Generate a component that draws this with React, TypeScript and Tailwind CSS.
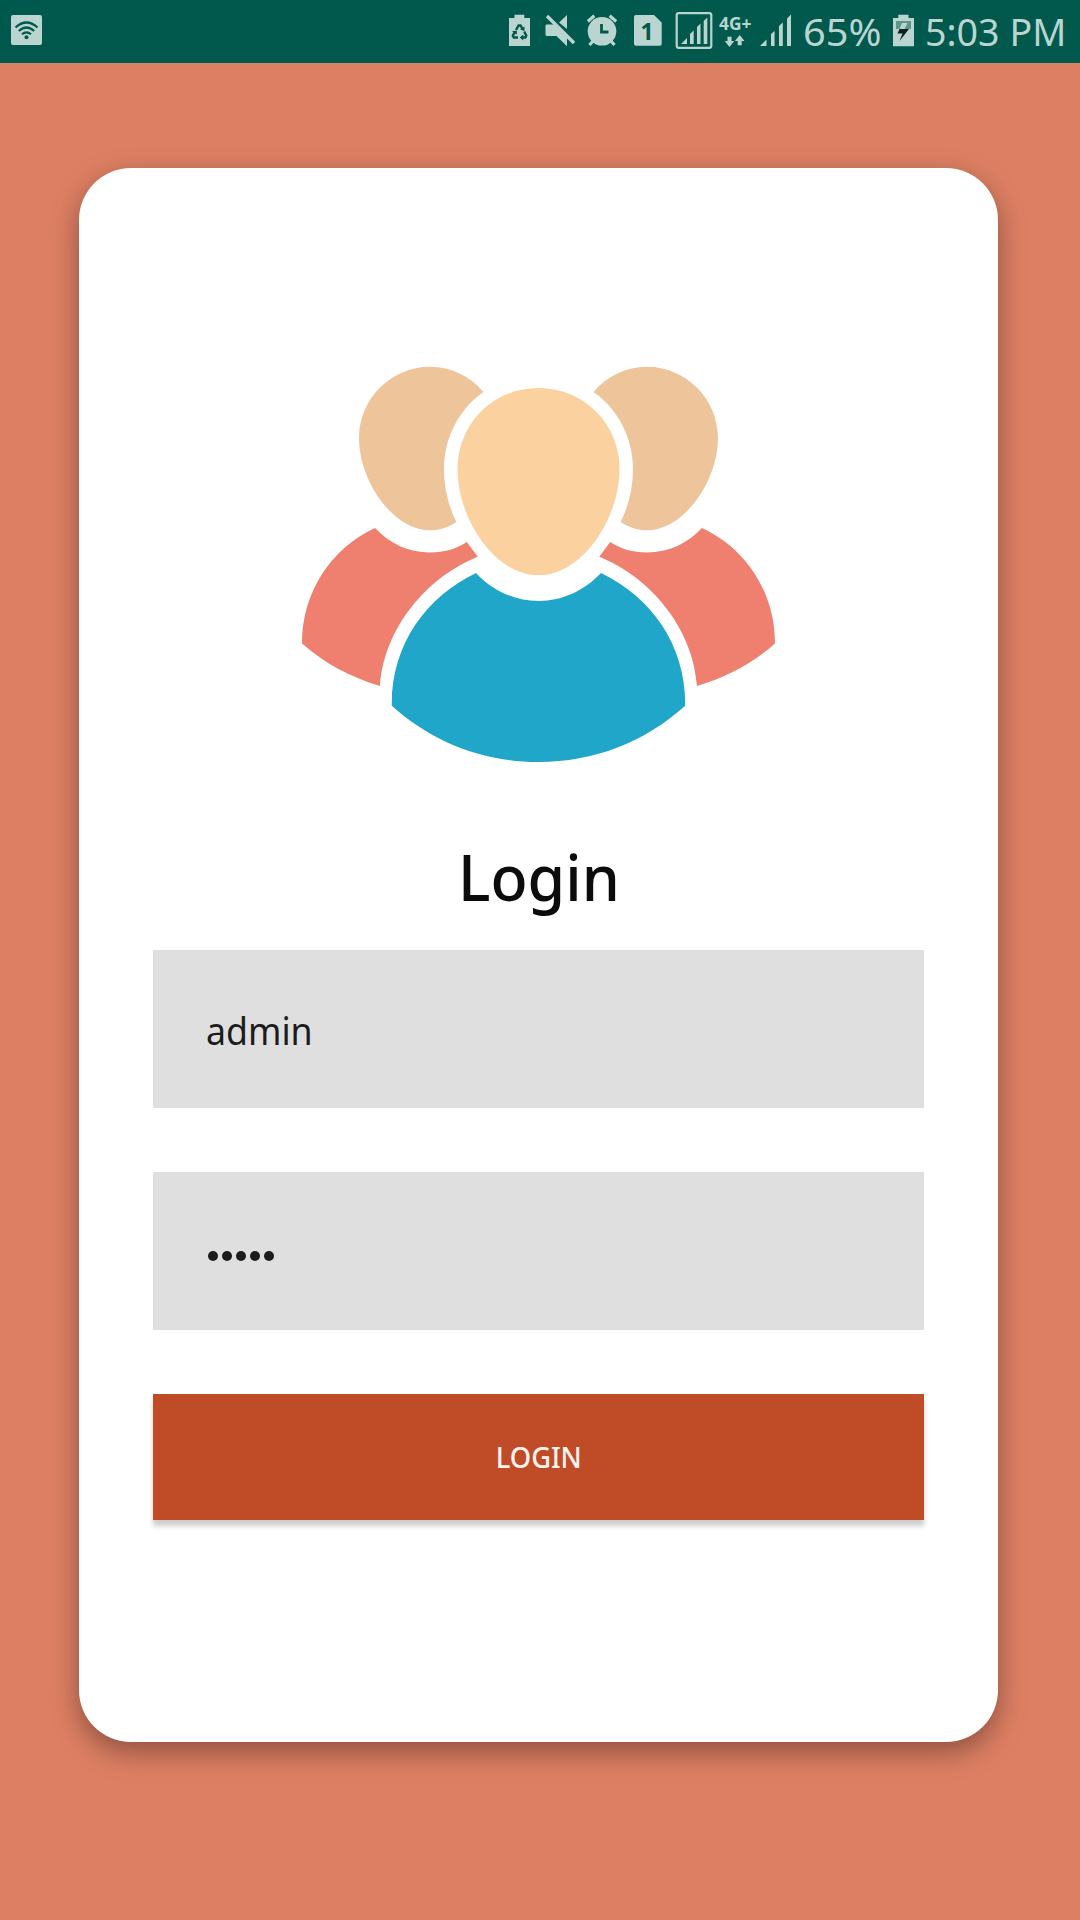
import React from "react";

const TINT = "#bad5d0";
const BAR = "#00594c";

/* Every status glyph spans the full bar height; x is its left edge along the bar. */
function Glyph({ x, w, className = "", children }: { x: number; w: number; className?: string; children: React.ReactNode }) {
  return (
    <svg width={w} height={63} viewBox={`${x} 0 ${w} 63`} fill={TINT} className={`block shrink-0 ${className}`}>
      {children}
    </svg>
  );
}

function SignalBars() {
  return (
    <>
      <path d="M760 46 L766.5 39.5 V46Z" />
      <path d="M771 46 V34 L774.6 31 V46Z" />
      <path d="M779 46 V26 L782.8 22.5 V46Z" />
      <path d="M787 46 V18.5 L791 14.5 V46Z" />
    </>
  );
}

function StatusBar() {
  return (
    <header className="flex h-[63px] w-full items-start bg-[#00594c] pl-[11px] text-[#bad5d0]">
      <Glyph x={11} w={31} className="mr-auto">
        <rect x="11" y="15" width="31" height="30" rx="2" />
        <g fill="none" stroke={BAR} strokeWidth="2.2">
          <path d="M15.5 27.5 Q26.5 17.5 37.5 27.5" />
          <path d="M18.8 31 Q26.5 24 34.2 31" />
          <path d="M22 34.3 Q26.5 30.3 31 34.3" />
        </g>
        <circle cx="26.5" cy="37.3" r="2" fill={BAR} />
      </Glyph>

      <Glyph x={509} w={21} className="mr-[15px]">
        <path d="M509 18 H514.5 V14.7 H524.3 V18 H530 V46 H509Z" />
        <g fill="none" stroke={BAR} strokeWidth="2.4">
          <path d="M516 30 L518.6 25.5 H520.6 L522.6 29" />
          <path d="M514.8 32 L512.8 35.8 L513.8 37.5 H518" />
          <path d="M524.3 31.5 L526.3 35.8 L525.3 37.5 H522" />
        </g>
        <path d="M524.5 26.5 V31 L520 29.4Z M512 31 L517 30.8 L516.7 34.8Z M523.3 34.5 V40.5 L519.7 37.5Z" fill={BAR} />
      </Glyph>

      <Glyph x={545} w={31} className="mr-[11px]">
        <path d="M545.5 25.5 Q545.5 24.5 547 24.5 H554.5 L567 37 V46.3 L556.5 36 H547 Q545.5 36 545.5 34.5Z" />
        <path d="M559 22.5 L567 15 V29Z" />
        <path d="M547 16 L574 43" stroke={TINT} strokeWidth="3.4" />
      </Glyph>

      <Glyph x={587} w={30} className="mr-[17px]">
        <circle cx="602" cy="31.3" r="14.3" />
        <path d="M587.8 21.5 L594.3 15.8 M616.2 21.5 L609.7 15.8" stroke={TINT} strokeWidth="3.2" />
        <path d="M593 41 L589.5 45 M611 41 L614.5 45" stroke={TINT} strokeWidth="3.2" />
        <path d="M601.5 24 V32 H608.5" fill="none" stroke={BAR} strokeWidth="2.8" />
      </Glyph>

      <div className="relative mr-[13px] h-[63px] w-[28px] shrink-0">
        <Glyph x={634} w={28}>
          <path d="M636 15 H654 L661.7 22.5 V43.7 Q661.7 45.7 659.7 45.7 H636 Q634 45.7 634 43.7 V17 Q634 15 636 15Z" />
        </Glyph>
        <span className="absolute left-0 top-[15px] w-[26px] text-center text-[23px] font-bold leading-[32px] text-[#00594c]">1</span>
      </div>

      <Glyph x={675} w={38} className="mr-[6px]">
        <rect x="676.7" y="13.2" width="34.6" height="34.6" rx="2" fill="none" stroke={TINT} strokeWidth="2.2" />
        <path d="M681 44 L687 38V44Z M690 44V34L693.7 30.5V44Z M697 44V27L700.5 23.5V44Z M703.7 44V21L707.3 17.5V44Z" />
      </Glyph>

      <div className="relative mr-[9px] h-[63px] w-[32px] shrink-0">
        <Glyph x={719} w={32}>
          <path d="M727.5 36.8 H731.5 V41 H734.3 L729.5 47 L724.7 41 H727.5Z" />
          <path d="M737.7 45.2 H741.7 V41 H744.5 L739.7 35 L734.9 41 H737.7Z" />
        </Glyph>
        <span className="absolute left-0 top-[12px] origin-left scale-x-[1.02] text-[17px] font-bold leading-[24px]">4G+</span>
      </div>

      <Glyph x={760} w={31} className="mr-[12px]">
        <SignalBars />
      </Glyph>

      <span className="mt-[3px] w-[90px] shrink-0 origin-left scale-x-[1.045] whitespace-nowrap text-[38px] leading-[56px]">65%</span>

      <Glyph x={893} w={21} className="mr-[11px]">
        <path d="M893 18 H898.3 V14.8 H908.5 V18 H914 V46.3 H893Z" />
        <path d="M896 21 H911 V29 H896Z" fill="#5d958b" />
        <path d="M902 23 H907.5 L904.5 29 H899.5Z" fill={TINT} />
        <path d="M899.5 29 H909 L899.5 41 L902.5 33.5 H897.5Z" fill="#10211e" />
      </Glyph>

      <span className="mt-[3px] w-[155px] shrink-0 origin-left scale-x-[0.99] whitespace-nowrap text-[38px] leading-[56px]">5:03 PM</span>
    </header>
  );
}

function SidePerson() {
  return (
    <>
      <path
        fill="#eec59b"
        d="M430 366.7C391 366.7 359 399 359 438C359 481 393 530.3 430 530.3C440 530.3 449 527 456.3 522C448 505 444 487 444 469C444 438 459 409 483.5 392C470 376 451 366.7 430 366.7Z"
      />
      <path
        fill="#ef8070"
        d="M375 528C389 543 408 552.5 430 552.5C444 552.5 456 549 466.8 542L477.8 556.8C427 577 384 628 380 686C350 677 324 663 302 643.5C302 591 332 548 375 528Z"
      />
    </>
  );
}

function PeopleLogo() {
  return (
    <svg width="475" height="397" viewBox="301 366 475 397" className="block shrink-0" role="img" aria-label="Users">
      <SidePerson />
      <g transform="translate(1077 0) scale(-1 1)">
        <SidePerson />
      </g>
      <path
        fill="#fcd1a0"
        d="M538.5 388C493 388 457.5 424 457.5 469C457.5 519 495 575.3 538.5 575.3C582 575.3 619.5 519 619.5 469C619.5 424 584 388 538.5 388Z"
      />
      <path
        fill="#1fa6c8"
        d="M476 573C492 590 514 601 538.5 601C563 601 585 590 601 573C651 597 686 645 685.2 705.7C645 742 594 762 538.5 762C483 762 432 742 391.8 705.7C391 645 426 597 476 573Z"
      />
    </svg>
  );
}

export default function App() {
  return (
    <div className="flex h-[1920px] w-[1080px] flex-col overflow-hidden bg-[#dd7f63] font-['Noto_Sans',sans-serif]">
      <StatusBar />
      <main className="ml-[79px] mt-[105px] flex h-[1574px] w-[919px] flex-col items-center rounded-[52px] bg-white px-[74px] pt-[198px] shadow-[0_10px_28px_rgba(0,0,0,0.36)]">
        <PeopleLogo />
        <h1 className="mt-[70px] h-[88px] scale-x-[0.965] text-[63px] font-medium leading-[88px] text-[#0c0c0c]">Login</h1>
        <div className="mt-[29px] flex h-[158px] w-full items-center bg-[#dfdfdf] pl-[53px] pt-[2px] text-[38px] text-[#1c1c1c]">
          <span className="origin-left scale-x-[0.94]">admin</span>
        </div>
        <div className="mt-[64px] flex h-[158px] w-full items-center gap-[4px] bg-[#dfdfdf] pl-[55px] pt-[10px]">
          {[0, 1, 2, 3, 4].map((i) => (
            <span key={i} className="size-[10px] rounded-full bg-[#1c1c1c]" />
          ))}
        </div>
        <button className="mt-[64px] flex h-[126px] w-full items-center justify-center bg-[#c04c27] text-[29px] font-medium text-[#fff3ee] shadow-[0_6px_5px_rgba(0,0,0,0.2)]">
          <span className="scale-x-[0.94]">LOGIN</span>
        </button>
      </main>
    </div>
  );
}
